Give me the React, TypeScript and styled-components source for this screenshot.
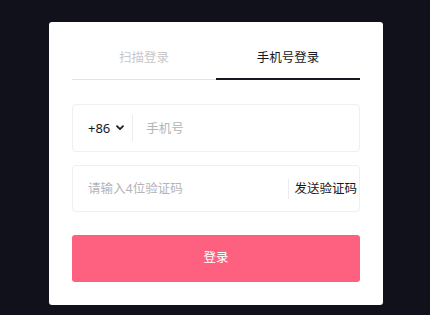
import React, { useState } from "react";
import styled, { createGlobalStyle } from "styled-components";

const GlobalStyle = createGlobalStyle`
  html, body {
    margin: 0;
    padding: 0;
    background: #10111b;
    font-family: "Noto Sans", "Noto Sans CJK SC", sans-serif;
  }
`;

const Page = styled.div`
  display: flex;
  justify-content: center;
  padding: 22px 0 0 2px;
  min-height: 315px;
  box-sizing: border-box;
`;

const Card = styled.div`
  width: 334px;
  align-self: flex-start;
  box-sizing: border-box;
  background: #fff;
  border-radius: 3px;
  padding: 22px 23px 23px 23px;
`;

const Tabs = styled.div`
  display: flex;
`;

const Tab = styled.div<{ $active?: boolean }>`
  flex: 1;
  height: 36px;
  box-sizing: border-box;
  padding-top: 4px;
  line-height: 20px;
  text-align: center;
  font-size: 12.5px;
  cursor: pointer;
  color: ${(p) => (p.$active ? "#161823" : "#c8c8cc")};
  border-bottom: ${(p) => (p.$active ? "2px solid #161823" : "1px solid #e3e3e6")};
  margin-bottom: ${(p) => (p.$active ? "0" : "1px")};
`;

const Form = styled.div`
  display: flex;
  flex-direction: column;
  gap: 13px;
  margin-top: 23px;
`;

const Field = styled.div<{ $h: number }>`
  display: flex;
  align-items: center;
  height: ${(p) => p.$h}px;
  box-sizing: border-box;
  border: 1px solid #efeff1;
  border-radius: 4px;
  padding: 0 2px 0 15px;
`;

const Prefix = styled.div`
  display: flex;
  align-items: center;
  gap: 6px;
  font-size: 13px;
  color: #161823;
  padding-right: 8px;
  margin-right: 13px;
  border-right: 1px solid #ececee;
  height: 26px;
`;

const Input = styled.input`
  flex: 1;
  min-width: 0;
  border: none;
  outline: none;
  background: transparent;
  font-family: inherit;
  font-size: 12.5px;
  color: #161823;
  padding: 0;
  &::placeholder {
    color: #b4b4b8;
  }
`;

const SendCode = styled.button`
  border: none;
  background: transparent;
  font-family: inherit;
  font-size: 12.5px;
  color: #161823;
  padding: 0 0 0 5px;
  height: 20px;
  line-height: 20px;
  border-left: 1px solid #ececee;
  cursor: pointer;
`;

const Submit = styled.button`
  display: block;
  margin-top: 23px;
  width: 100%;
  height: 47px;
  border: none;
  border-radius: 3px;
  background: #fe6180;
  color: #fff;
  font-family: inherit;
  font-size: 12.5px;
  line-height: 20px;
  padding: 0 0 2px;
  cursor: pointer;
`;

const Chevron = () => (
  <svg width="8" height="6" viewBox="0 0 8 6" fill="none">
    <path d="M1 1.2l3 3 3-3" stroke="#161823" strokeWidth="1.7" strokeLinecap="round" strokeLinejoin="round" />
  </svg>
);

export default function App() {
  const [tab, setTab] = useState(1);
  return (
    <Page>
      <GlobalStyle />
      <Card>
        <Tabs>
          <Tab $active={tab === 0} onClick={() => setTab(0)}>扫描登录</Tab>
          <Tab $active={tab === 1} onClick={() => setTab(1)}>手机号登录</Tab>
        </Tabs>
        <Form>
          <Field $h={48}>
            <Prefix>
              +86 <Chevron />
            </Prefix>
            <Input placeholder="手机号" />
          </Field>
          <Field $h={47}>
            <Input placeholder="请输入4位验证码" />
            <SendCode>发送验证码</SendCode>
          </Field>
        </Form>
        <Submit>登录</Submit>
      </Card>
    </Page>
  );
}
